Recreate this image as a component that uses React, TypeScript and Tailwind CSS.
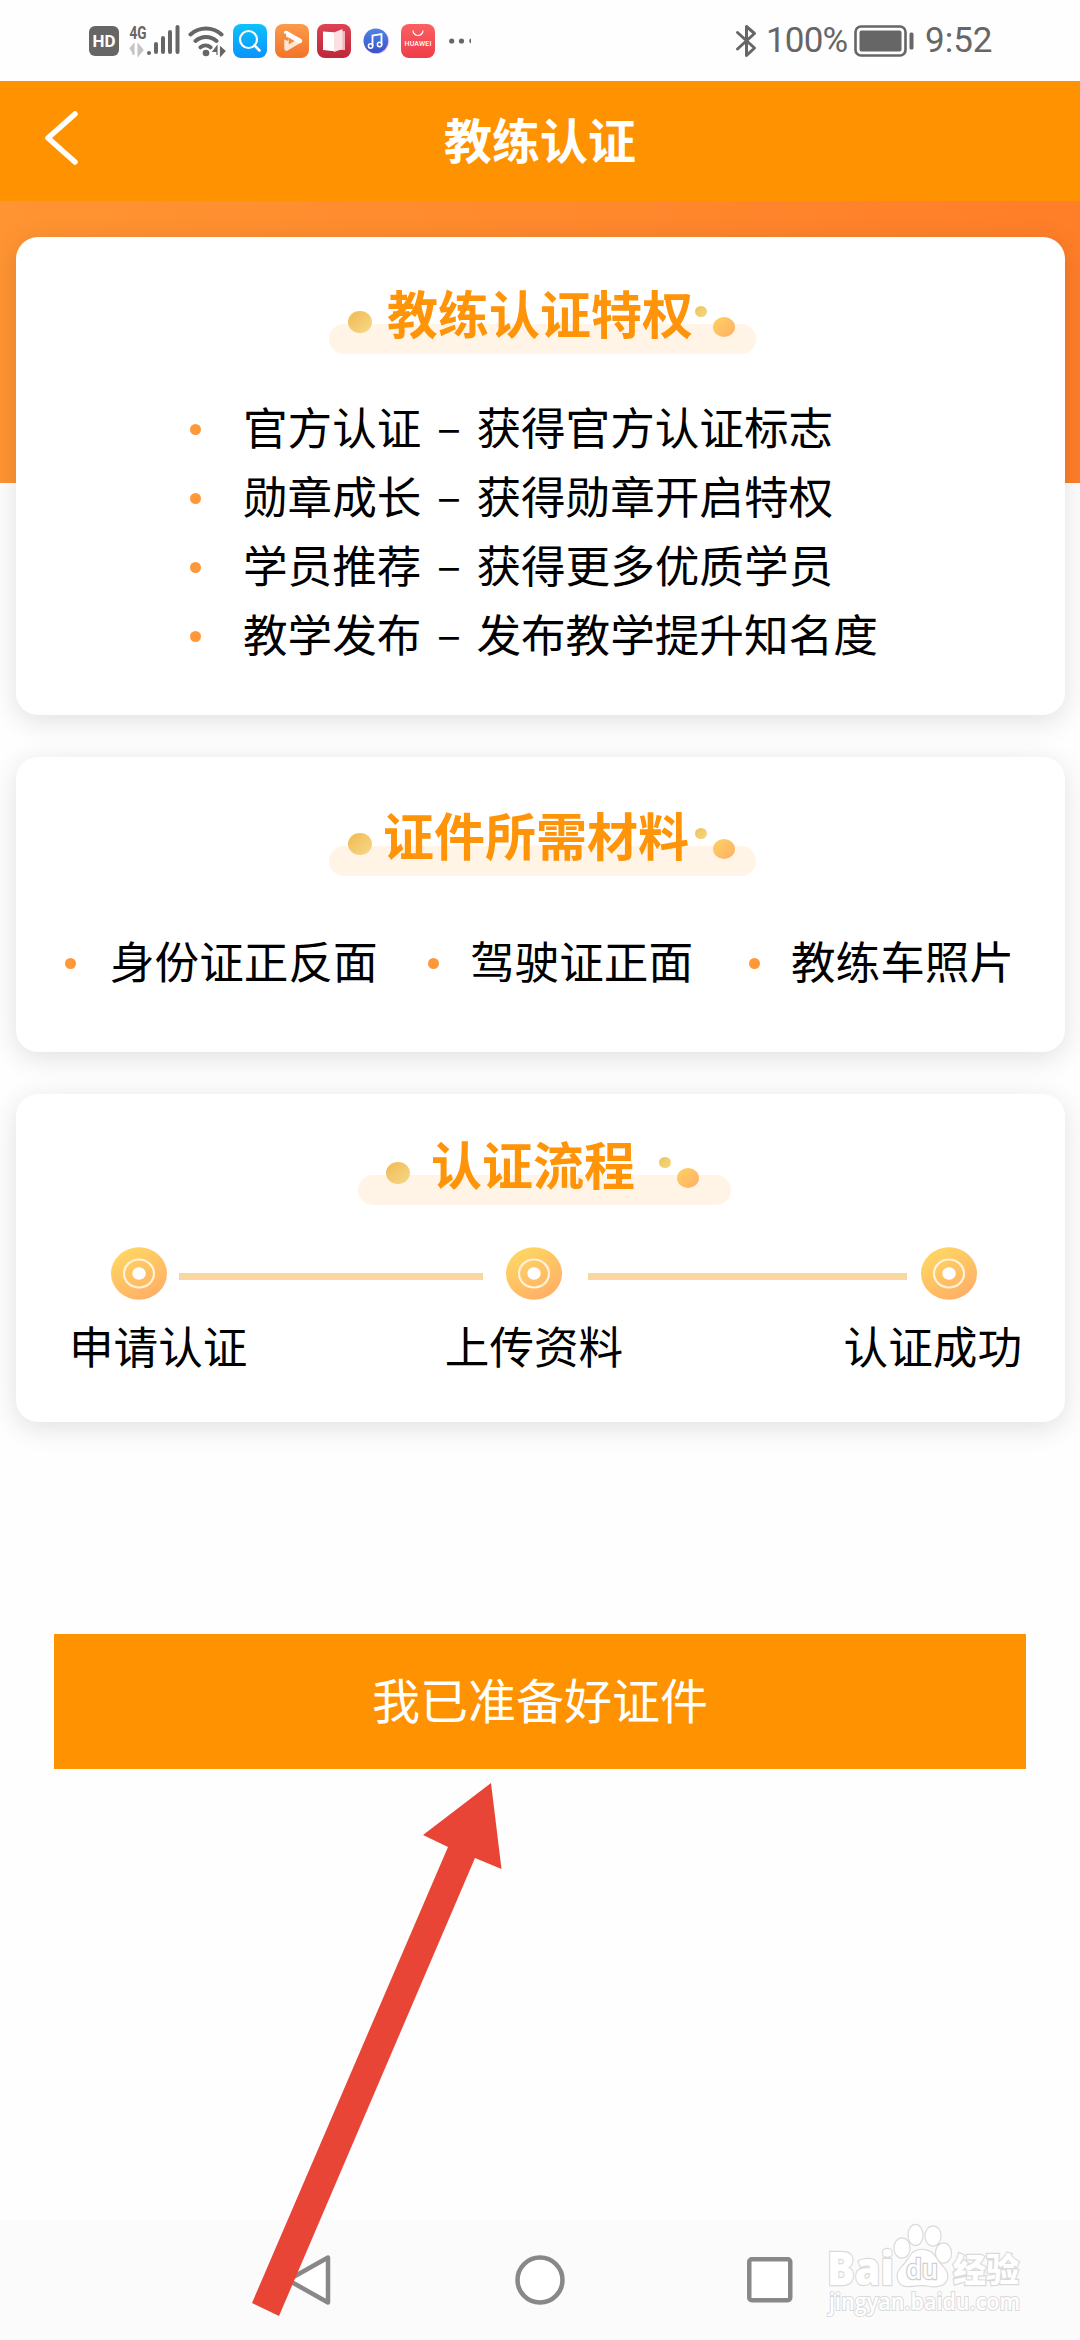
import React from 'react';

const privileges = [
  { name: '官方认证', desc: '获得官方认证标志' },
  { name: '勋章成长', desc: '获得勋章开启特权' },
  { name: '学员推荐', desc: '获得更多优质学员' },
  { name: '教学发布', desc: '发布教学提升知名度' },
];

const StatusBar: React.FC = () => (
  <div className="flex h-[81px] items-center justify-between bg-[#fefefe] pr-[90px] pl-[89px] text-[#666]">
    <div className="flex items-center">
      <svg width="30" height="30" viewBox="0 0 30 30">
        <rect width="30" height="30" rx="6" fill="#666" />
        <text x="3.5" y="21" fontSize="17" fontWeight="700" fontFamily="Roboto, sans-serif" fill="#fff" textLength="23" lengthAdjust="spacingAndGlyphs">HD</text>
      </svg>
      <svg className="ml-[10px] overflow-visible" width="52" height="34" viewBox="0 0 52 34">
        <text x="0.5" y="14.5" fontSize="18" fontWeight="700" fontFamily="Roboto, sans-serif" fill="#666" textLength="17" lengthAdjust="spacingAndGlyphs">4G</text>
        <path d="M4.5 31V21L1 25M9.5 21v10l4-5z" fill="#c4c4c4" stroke="#c4c4c4" strokeWidth="2" />
        <g stroke="#666" strokeWidth="4" strokeLinecap="round">
          <path d="M20 29v0M27 28v-8M34 28v-14M41 28V8M48.500 28V3" />
        </g>
      </svg>
      <svg className="ml-[7px]" width="38" height="34" viewBox="0 0 38 34">
        <g fill="none" stroke="#666" strokeWidth="4" strokeLinecap="round">
          <path d="M2.500 10.500a23 23 0 0 1 31 0M7.500 17a15.500 15.500 0 0 1 21 0M12.500 23.300a8 8 0 0 1 10 0" />
        </g>
        <circle cx="18" cy="29" r="3.300" fill="#666" />
        <path d="M29 31v-9l-4 5.500h4zM32.500 23v9l4.500-5z" fill="#666" stroke="#666" strokeWidth="1.200" />
      </svg>
      <svg className="ml-[7px]" width="34" height="34" viewBox="0 0 34 34">
        <defs>
          <linearGradient id="find" x1="0" y1="0" x2="0" y2="1">
            <stop offset="0" stopColor="#0dc1fb" />
            <stop offset="1" stopColor="#0a94fb" />
          </linearGradient>
        </defs>
        <rect width="34" height="34" rx="8" fill="url(#find)" />
        <circle cx="15.500" cy="15.500" r="8.500" fill="none" stroke="#fff" strokeWidth="2.200" />
        <path d="M21.500 21.500l5 5" stroke="#fff" strokeWidth="2.500" strokeLinecap="round" />
      </svg>
      <svg className="ml-2" width="34" height="34" viewBox="0 0 34 34">
        <defs>
          <linearGradient id="video" x1="0" y1="0" x2="0" y2="1">
            <stop offset="0" stopColor="#fb9a4b" />
            <stop offset="1" stopColor="#f27428" />
          </linearGradient>
        </defs>
        <rect width="34" height="34" rx="8" fill="url(#video)" />
        <path d="M11.500 9.500l12.500 7.500-12.500 7.500z" fill="none" stroke="#fff" strokeWidth="4.500" strokeLinejoin="round" strokeOpacity="0.8" />
        <path d="M11 9l14 8" stroke="#fff" strokeWidth="4.500" strokeLinecap="round" />
        <path d="M9.500 9.500v4.500l4 1.500" fill="none" stroke="#f98a3d" strokeWidth="3" />
      </svg>
      <svg className="ml-2" width="34" height="34" viewBox="0 0 34 34">
        <defs>
          <linearGradient id="book" x1="0" y1="0" x2="0" y2="1">
            <stop offset="0" stopColor="#dd4255" />
            <stop offset="1" stopColor="#bd2737" />
          </linearGradient>
        </defs>
        <rect width="34" height="34" rx="8" fill="url(#book)" />
        <path d="M6 7.500l11 .8v19L6 26z" fill="#fff" />
        <path d="M18 8l10-1v19H18z" fill="#f3b3ba" />
        <path d="M17 8.500l8.500-3.500v20L17 28z" fill="#fadfe3" />
      </svg>
      <svg className="ml-3" width="26" height="26" viewBox="0 0 26 26">
        <defs>
          <linearGradient id="music" x1="0" y1="0" x2="0" y2="1">
            <stop offset="0" stopColor="#4e86e4" />
            <stop offset="1" stopColor="#3a51cb" />
          </linearGradient>
        </defs>
        <circle cx="13.300" cy="13.300" r="12.500" fill="#d9a4f2" />
        <circle cx="12.800" cy="12.800" r="12.300" fill="url(#music)" />
        <path d="M9.500 18V7.500l9-1.500v10.500" fill="none" stroke="#fff" strokeWidth="1.800" />
        <circle cx="7.600" cy="18" r="2.200" fill="none" stroke="#fff" strokeWidth="1.500" />
        <circle cx="16.600" cy="16.500" r="2.200" fill="none" stroke="#fff" strokeWidth="1.500" />
      </svg>
      <svg className="ml-3" width="34" height="34" viewBox="0 0 34 34">
        <defs>
          <linearGradient id="mall" x1="0" y1="0" x2="0" y2="1">
            <stop offset="0" stopColor="#fb6163" />
            <stop offset="1" stopColor="#ee3d49" />
          </linearGradient>
        </defs>
        <rect width="34" height="34" rx="8" fill="url(#mall)" />
        <path d="M12 6.500a5 5 0 0 0 10 0" fill="none" stroke="#fff" strokeWidth="1.200" />
        <text x="3.500" y="22" fontSize="7" fontWeight="500" fontFamily="Roboto, sans-serif" fill="#fff" textLength="27">HUAWEI</text>
      </svg>
      <svg className="ml-[13px]" width="24" height="6" viewBox="0 0 24 6" fill="#666">
        <circle cx="3.700" cy="3" r="2.600" />
        <circle cx="13.500" cy="3" r="2.600" />
        <path d="M23 .6v4.800a2.500 2.500 0 0 1 0-4.800z" />
      </svg>
    </div>
    <div className="flex items-center font-[Roboto,sans-serif] text-[35px] leading-[40px]">
      <svg width="24" height="34" viewBox="0 0 24 34" fill="none" stroke="#666" strokeWidth="3" strokeLinejoin="round" strokeLinecap="round">
        <path d="M2.500 8.500l17 15.500-8 7.500V2.500l8 7-17 15.500" />
      </svg>
      <span className="ml-[7px] w-[83px] tracking-[-0.8px]">100%</span>
      <svg className="ml-[5px]" width="60" height="32" viewBox="0 0 60 32">
        <rect x="1.500" y="1.500" width="50" height="29" rx="5.500" fill="none" stroke="#666" strokeWidth="2.600" />
        <rect x="5.500" y="5.500" width="42" height="21" rx="2" fill="#666" />
        <rect x="55.500" y="7.500" width="4" height="17" rx="1.500" fill="#666" />
      </svg>
      <span className="ml-[11px] w-[65px]">9:52</span>
    </div>
  </div>
);

const Header: React.FC = () => (
  <header className="grid h-[120px] grid-cols-[1fr_auto_1fr] items-center bg-[#ff9200]">
    <button className="ml-[43px] w-[40px]" aria-label="返回">
      <svg width="38" height="60" viewBox="0 0 38 60" fill="none" stroke="#fff" strokeWidth="5.500" strokeLinecap="round" strokeLinejoin="round">
        <path d="M32 3L5 27l27 24" />
      </svg>
    </button>
    <h1 className="pb-[6px] text-[48px] leading-[60px] font-bold text-white">教练认证</h1>
    <span />
  </header>
);

interface SectionTitleProps {
  text: string;
  className: string;
  leftDot: string;
  rightDots: string;
}

// Heading drawn on a pale pill, with a gold dot on the left and two on the right
const SectionTitle: React.FC<SectionTitleProps> = ({ text, className, leftDot, rightDots }) => (
  <div className={`relative h-[72px] ${className}`}>
    <div className="absolute inset-x-0 bottom-0 h-[30px] rounded-full bg-[#fff4e6]" />
    <i className={`absolute top-[29px] h-[22px] w-[24px] rounded-[50%] bg-linear-to-br from-[#f0b94f] to-[#f6d98a] ${leftDot}`} />
    <div className={`absolute top-[24px] h-[31px] w-[40px] ${rightDots}`}>
      <i className="absolute top-0 left-0 h-[11px] w-[12px] rounded-[50%] bg-linear-to-br from-[#ecc35c] to-[#f5d780]" />
      <i className="absolute right-0 bottom-0 h-[20px] w-[22px] rounded-[50%] bg-linear-to-br from-[#fdd262] to-[#ffae66]" />
    </div>
    <h2 className="relative text-[51px] leading-[60px] font-bold whitespace-nowrap text-[#ff9408]">{text}</h2>
  </div>
);

const Bullet: React.FC = () => (
  <i className="mt-[7px] h-[11px] w-[11px] shrink-0 rounded-full bg-[#ff9838]" />
);

const StepDot: React.FC<{ id: string; className: string }> = ({ id, className }) => (
  <svg className={`shrink-0 ${className}`} width="56" height="53" viewBox="0 0 56 53">
    <defs>
      <linearGradient id={id} x1="0.2" y1="0" x2="0.8" y2="1">
        <stop offset="0" stopColor="#ffd863" />
        <stop offset="1" stopColor="#ffad66" />
      </linearGradient>
    </defs>
    <ellipse cx="28" cy="26.500" rx="28" ry="26.300" fill={`url(#${id})`} />
    <ellipse cx="28" cy="26.500" rx="15" ry="14" fill="none" stroke="#fff2d6" strokeWidth="2.200" />
    <ellipse cx="28" cy="26.500" rx="6.700" ry="6.200" fill="#fff" />
  </svg>
);

const BaiduMark: React.FC = () => (
  <svg className="absolute top-[2px] left-[825px] overflow-visible" width="204" height="104" viewBox="0 0 204 104" fill="#fff" stroke="#dadada" strokeWidth="2.400" paintOrder="stroke" fontFamily="'Open Sans', 'Noto Sans CJK SC', sans-serif">
    <text x="2" y="63" fontSize="46" fontWeight="800" textLength="67" lengthAdjust="spacingAndGlyphs">Bai</text>
    <ellipse cx="77" cy="26" rx="7.500" ry="9.500" />
    <ellipse cx="90.500" cy="13" rx="7" ry="10" />
    <ellipse cx="108" cy="14" rx="7.500" ry="9.500" />
    <ellipse cx="118.500" cy="31" rx="7.500" ry="9.500" />
    <path d="M97 28c-12 0-12 10-20 17-8 8-4 19 5 19 6 0 9-1 15-1s9 2 15 1c10-1 14-10 6-19-8-8-9-17-21-17z" />
    <text x="81" y="57" fontSize="27" fontWeight="600" strokeWidth="2.600" stroke="#cfcfcf" textLength="32" lengthAdjust="spacingAndGlyphs">du</text>
    <text x="128" y="60" fontSize="33" fontWeight="900">经验</text>
    <text x="4" y="88" fontSize="23" fontWeight="600" strokeWidth="2" textLength="191" lengthAdjust="spacingAndGlyphs">jingyan.baidu.com</text>
  </svg>
);

const NavBar: React.FC = () => (
  <nav className="relative flex h-[120px] items-center bg-[#fbfbfb] pl-[281px]">
    <svg className="mr-[184px]" width="50" height="52" viewBox="0 0 50 52" fill="#fff" stroke="#888" strokeWidth="4.500" strokeLinejoin="round">
      <path d="M47 3.500v45L7 26z" />
    </svg>
    <svg width="50" height="50" viewBox="0 0 50 50" fill="#fff" stroke="#888" strokeWidth="4.500">
      <circle cx="25" cy="25" r="22.500" />
    </svg>
    <svg className="ml-[182px]" width="46" height="46" viewBox="0 0 46 46" fill="#fff" stroke="#888" strokeWidth="4.500">
      <rect x="2.250" y="2.250" width="41" height="41" rx="2.500" />
    </svg>
    <BaiduMark />
  </nav>
);

const card = 'ml-[16px] w-[1049px] rounded-[22px] bg-white shadow-[0_6px_28px_rgba(0,0,0,0.12)]';

export default function App() {
  return (
    <div className="relative flex h-[2340px] w-[1080px] flex-col overflow-hidden bg-[#fefefe] font-['Noto_Sans_CJK_SC',sans-serif] text-black">
      <StatusBar />
      <Header />

      <main className="flex-1 bg-linear-to-r from-[#ff9432] to-[#ff7e28] bg-[length:100%_282px] bg-no-repeat pt-[36px] text-[44.6px] leading-[69px]">
        <section className={`${card} h-[478px] pt-[45px]`}>
          <SectionTitle text="教练认证特权" className="ml-[313px] w-[427px] pl-[58px]" leftDot="left-[19px]" rightDots="right-[21px]" />
          <ul className="mt-[37px] pl-[174px]">
            {privileges.map((item) => (
              <li key={item.name} className="flex h-[69px] items-center whitespace-nowrap">
                <Bullet />
                <span className="ml-[42px]">{item.name}</span>
                <span className="w-[55px] pb-[2px] text-center">–</span>
                <span>{item.desc}</span>
              </li>
            ))}
          </ul>
        </section>

        <section className={`${card} mt-[42px] h-[295px] pt-[47px]`}>
          <SectionTitle text="证件所需材料" className="ml-[313px] w-[427px] pl-[54px]" leftDot="left-[19px]" rightDots="right-[21px]" />
          <div className="mt-[49px] flex items-center pl-[49px] whitespace-nowrap">
            <Bullet />
            <span className="ml-[34px] w-[318px]">身份证正反面</span>
            <Bullet />
            <span className="ml-[31px] w-[279px]">驾驶证正面</span>
            <Bullet />
            <span className="ml-[31px]">教练车照片</span>
          </div>
        </section>

        <section className={`${card} mt-[42px] h-[328px] pt-[39px]`}>
          <SectionTitle text="认证流程" className="ml-[342px] w-[373px] pl-[73px]" leftDot="left-[28px]" rightDots="right-[32px]" />
          <div className="mt-[42px] flex items-center">
            <StepDot id="step1" className="ml-[95px]" />
            <div className="mt-[5px] ml-[12px] h-[7px] w-[304px] bg-[#fbd6a0]" />
            <StepDot id="step2" className="ml-[23px]" />
            <div className="mt-[5px] ml-[26px] h-[7px] w-[319px] bg-[#fbd6a0]" />
            <StepDot id="step3" className="ml-[14px]" />
          </div>
          <div className="mt-[10px] flex justify-between pr-[43px] pl-[53px]">
            <span>申请认证</span>
            <span className="-ml-[23px]">上传资料</span>
            <span>认证成功</span>
          </div>
        </section>

        <button className="mt-[212px] ml-[54px] block h-[135px] w-[972px] bg-[#ff9200] pb-[6px] text-[48px] text-white">
          我已准备好证件
        </button>
      </main>

      <NavBar />

      <svg className="absolute top-[1775px] left-[245px]" width="265" height="550" viewBox="245 1775 265 550">
        <path d="M491 1783L423 1835l25 12L252 2303l27 13L475 1858l26.500 11z" fill="#e94537" />
      </svg>
    </div>
  );
}
